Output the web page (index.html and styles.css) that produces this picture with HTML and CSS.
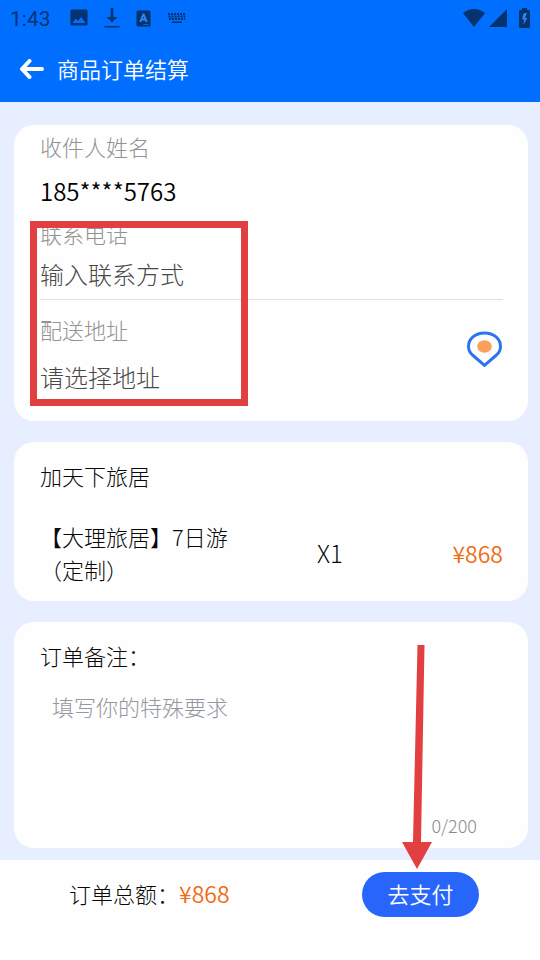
FILE: index.html
```html
<!DOCTYPE html>
<html lang="zh-CN">
<head>
<meta charset="utf-8">
<meta name="viewport" content="width=device-width, initial-scale=1">
<title>商品订单结算</title>
<link rel="stylesheet" href="styles.css">
</head>
<body>
<div class="page">
  <header class="top">
    <div class="status">
      <span class="clock">1:43</span>
      <svg class="status-icon" width="18" height="18" viewBox="0 0 18 18"><path fill-rule="evenodd" d="M2 0.5h14a1.5 1.5 0 0 1 1.5 1.500v13a1.500 1.500 0 0 1-1.500 1.500H2A1.500 1.500 0 0 1 .5 15V2A1.500 1.500 0 0 1 2 .5zM2.500 14h13L11.300 8 8 12 5.700 9.500z"/></svg>
      <svg class="status-icon" width="16" height="20" viewBox="0 0 16 20"><path d="M6.700 0h2.600v9h4L8 14.500 2.700 9h4zM.5 18h15v1.500H.5z"/></svg>
      <svg class="status-icon" width="15" height="17" viewBox="0 0 15 17"><rect x=".5" y=".5" width="14" height="16" rx="1.500"/><path class="cut-line" d="M4.300 12 7.300 4.500h.4L10.700 12M5.300 9.500h4.400"/><path class="cut-dots" d="M7.500 14.500h5"/></svg>
      <svg class="status-icon" width="20" height="12" viewBox="0 0 20 12"><path class="keys" d="M1 2h18M1.500 4.500h17M2 7h16"/><path d="M5 9.500h10V11H5z"/></svg>
      <span class="grow"></span>
      <svg class="status-icon" width="22" height="18" viewBox="0 0 22 18"><path d="M0 4Q11-4 22 4L11 18z"/></svg>
      <svg class="status-icon" width="18" height="18" viewBox="0 0 18 18"><path d="M18 0v18H0z"/></svg>
      <svg class="status-icon" width="11" height="20" viewBox="0 0 11 20"><path d="M3 0h5v2h1.500A1.500 1.500 0 0 1 11 3.500v15A1.500 1.500 0 0 1 9.500 20h-8A1.500 1.500 0 0 1 0 18.500v-15A1.500 1.500 0 0 1 1.500 2H3z"/><path class="bolt" d="M8 4.500 4.500 5.500 3 11.500h2.200L4.300 17l4-7H6z"/></svg>
    </div>
    <div class="titlebar">
      <button class="back" type="button" aria-label="返回"><svg width="24" height="20" viewBox="0 0 24 20"><path d="M22 10H2M9.500 2 2 10l7.500 8"/></svg></button>
      <h1>商品订单结算</h1>
    </div>
  </header>

  <main class="content">
    <section class="card contact">
      <div class="field name">
        <label for="name">收件人姓名</label>
        <input id="name" type="text" value="185****5763">
      </div>
      <div class="field phone">
        <label for="phone">联系电话</label>
        <input id="phone" type="text" placeholder="输入联系方式">
      </div>
      <div class="address">
        <div class="field">
          <label for="address">配送地址</label>
          <input id="address" type="text" placeholder="请选择地址">
        </div>
        <button class="locate" type="button" aria-label="选择位置"><svg width="37" height="38" viewBox="0 0 37 38"><path class="pin" d="M18.500 35.300 6.500 25C3.500 22.300 2.500 19.500 2.500 16.500 2.500 9 9 3 18.500 3s16 6 16 13.500c0 3-1 5.800-4 8.500z"/><ellipse class="dot" cx="18.500" cy="16.500" rx="7.300" ry="6.200"/></svg></button>
      </div>
      <div class="highlight"></div>
    </section>

    <section class="card goods">
      <h2>加天下旅居</h2>
      <div class="item">
        <p class="item-name">【大理旅居】7日游（定制）</p>
        <span class="count">X1</span>
        <span class="price">¥868</span>
      </div>
    </section>

    <section class="card remark">
      <label for="remark">订单备注：</label>
      <textarea id="remark" maxlength="200" placeholder="填写你的特殊要求"></textarea>
      <span class="counter">0/200</span>
    </section>
  </main>

  <footer class="bottom">
    <p class="total">订单总额：<span class="price">¥868</span></p>
    <button class="pay" type="button">去支付</button>
    <svg class="pointer" width="30" height="224" viewBox="0 0 30 224"><path d="M15.500 0h7L19 197h11L15 224 0 197h11z"/></svg>
  </footer>
</div>
</body>
</html>
```
FILE: styles.css
```css
* {
  box-sizing: border-box;
}

body {
  margin: 0;
  background: #fefefe;
  color: #080808;
  font-family: "Noto Sans CJK SC", sans-serif;
  font-size: 22px;
  font-weight: 300;
  line-height: 32px;
}

h1, h2, p {
  margin: 0;
  font-size: 22px;
  font-weight: inherit;
}

button, input, textarea {
  margin: 0;
  padding: 0;
  border: 0;
  background: none;
  color: inherit;
  font: inherit;
}

button {
  cursor: pointer;
}

svg {
  display: block;
}

.page {
  display: flex;
  flex-direction: column;
  min-height: 100vh;
}

.top {
  background: #006eff;
}

.status {
  display: flex;
  align-items: center;
  height: 36px;
  padding: 0 10px;
  color: #05336f;
}

.clock {
  width: 60px;
  padding-top: 2px;
  font-family: Roboto, sans-serif;
  font-size: 21px;
  font-weight: 400;
}

.status-icon {
  margin-right: 16px;
  fill: #05336f;
}

.grow {
  flex: 1;
}

.grow ~ .status-icon {
  margin-right: 4px;
}

.grow ~ .status-icon:last-child {
  margin: 0 0 0 8px;
}

.cut-line, .cut-dots {
  fill: none;
  stroke: #2c86f5;
  stroke-width: 2;
}

.cut-dots {
  stroke-width: 1;
  stroke-dasharray: 1 1;
}

.keys {
  fill: none;
  stroke: #05336f;
  stroke-width: 2;
  stroke-dasharray: 2 1;
}

.bolt {
  fill: #2c86f5;
}

.titlebar {
  display: flex;
  align-items: center;
  gap: 13px;
  height: 66px;
  padding: 0 20px;
  color: #fff;
}

.titlebar h1 {
  padding-bottom: 3px;
  font-weight: 350;
}

.back path {
  fill: none;
  stroke: #fff;
  stroke-width: 4;
  stroke-linecap: round;
  stroke-linejoin: round;
}

.content {
  display: flex;
  flex-direction: column;
  flex: 1;
  gap: 21px;
  padding: 23px 12px 12px 14px;
  background: #e6eeff;
}

.card {
  position: relative;
  padding: 0 25px 0 26px;
  border-radius: 20px;
  background: #fefefe;
}

.field {
  display: flex;
  flex-direction: column;
  flex: 1;
  min-width: 0;
}

.field label {
  color: #929292;
}

.field input {
  width: 100%;
  height: 32px;
  font-size: 24px;
}

.field input::placeholder {
  color: #484848;
  opacity: 1;
}

.name {
  gap: 13px;
  padding-top: 5px;
}

.name input {
  color: #000;
  font-weight: 350;
}

.phone {
  gap: 9px;
  padding: 10px 0 9px;
  border-bottom: 1px solid #dcdfe3;
}

.address {
  display: flex;
  align-items: center;
  padding: 13px 0 28px;
}

.address .field {
  gap: 16px;
}

.locate {
  padding-bottom: 8px;
}

.pin {
  fill: none;
  stroke: #2b74ee;
  stroke-width: 3;
}

.dot {
  fill: #fba05a;
}

.highlight {
  position: absolute;
  top: 96px;
  left: 16px;
  width: 218px;
  height: 185px;
  border: 7px solid #e23f40;
  pointer-events: none;
}

.goods {
  padding-top: 17px;
  padding-bottom: 15px;
}

.item {
  display: grid;
  grid-template-columns: 9fr 4fr 4fr;
  align-items: center;
  padding-top: 29px;
}

.item-name {
  max-width: 220px;
  line-height: 33px;
}

.count {
  padding-left: 32px;
  font-size: 24px;
}

.price {
  color: #ef6a13;
  font-size: 23px;
  font-weight: 350;
}

.item .price {
  text-align: right;
}

.remark {
  display: flex;
  flex-direction: column;
  padding-top: 17px;
  padding-bottom: 10px;
}

.remark textarea {
  height: 114px;
  margin: 19px 12px 8px;
  outline: 0;
  resize: none;
}

.remark textarea::placeholder {
  color: #9298a0;
  opacity: 1;
}

.counter {
  align-self: flex-end;
  padding-right: 26px;
  color: #8b8b8b;
  font-size: 18px;
  line-height: 26px;
}

.bottom {
  position: relative;
  display: flex;
  align-items: flex-start;
  justify-content: space-between;
  min-height: 100px;
  padding: 12px 61px 0 69px;
}

.total {
  line-height: 42px;
}

.pay {
  width: 117px;
  height: 45px;
  padding-bottom: 4px;
  border-radius: 23px;
  background: #2865fb;
  color: #fff;
  font-weight: 350;
}

.pointer {
  position: absolute;
  top: -215px;
  right: 108px;
  fill: #e23f40;
  pointer-events: none;
}
```
